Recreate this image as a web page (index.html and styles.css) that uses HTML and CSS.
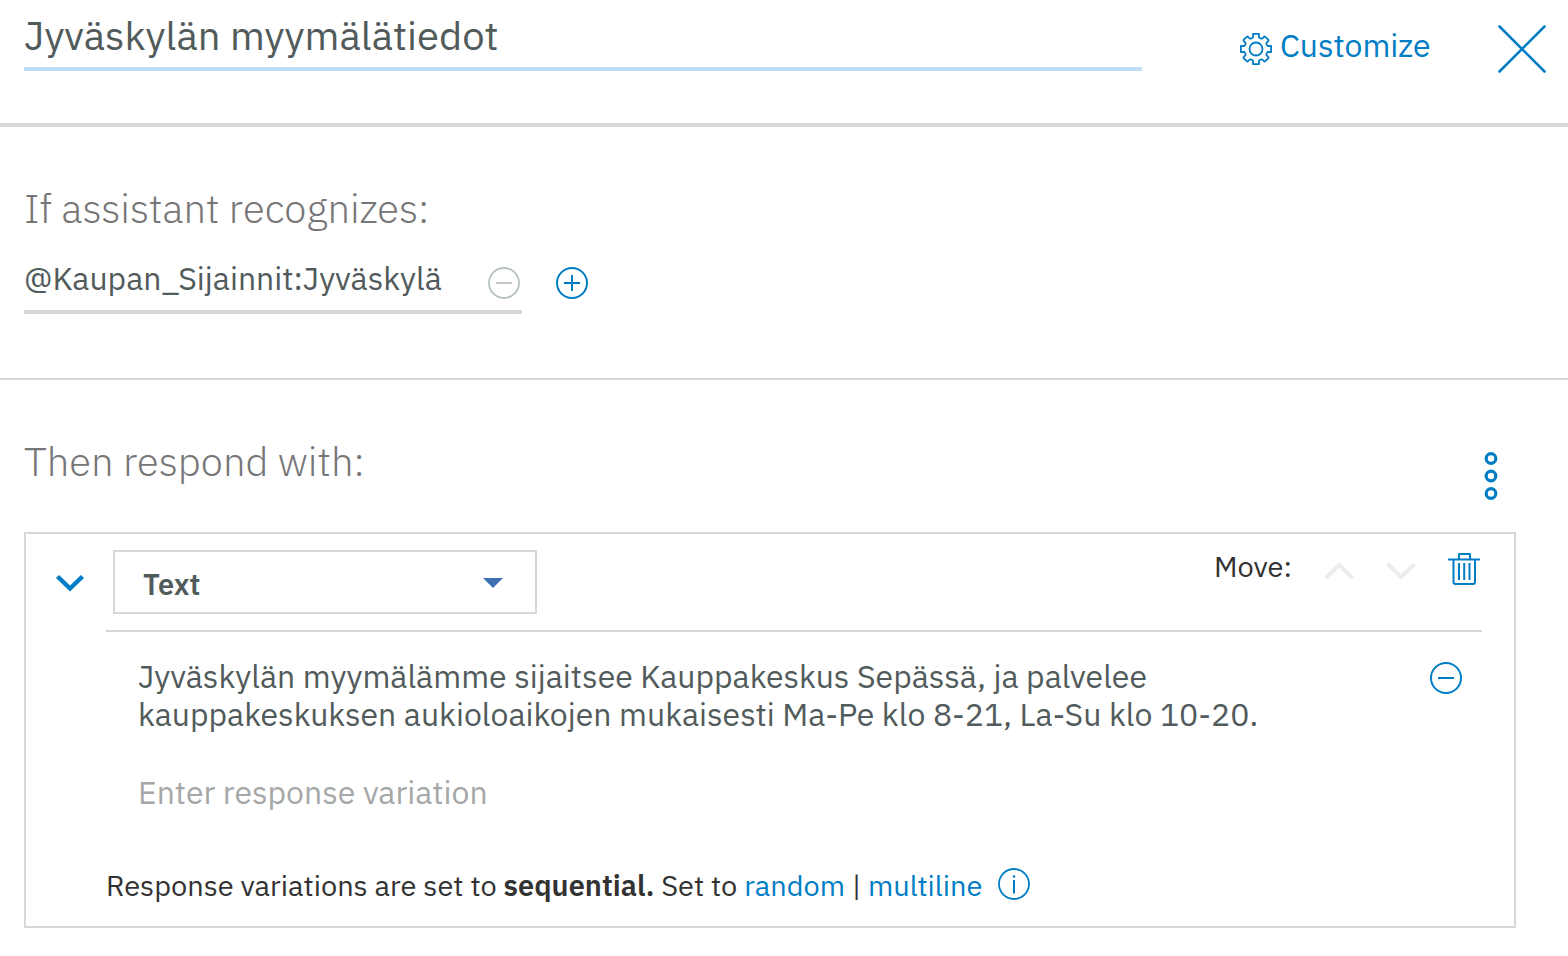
FILE: index.html
```html
<!DOCTYPE html>
<html lang="fi">
<head>
<meta charset="utf-8">
<meta name="viewport" content="width=device-width, initial-scale=1">
<title>Jyväskylän myymälätiedot</title>
<link rel="stylesheet" href="styles.css">
</head>
<body>
<header class="header">
  <input class="title-input" type="text" aria-label="Node name" value="Jyväskylän myymälätiedot">
  <button class="customize" type="button">
    <svg class="icon" viewBox="0 0 32 32" fill="none" stroke="currentColor" stroke-width="1.8" stroke-linejoin="round" aria-hidden="true">
      <path d="M13 .9h6v3q0 .8.8 1.1l1.300.6q.7.300 1.300-.300l1.500-1.500q.7-.7 1.400 0l2.900 2.900q.7.7 0 1.400l-1.500 1.500q-.6.6-.300 1.300l.6 1.300q.300.800 1.100.800h3v6h-3q-.8 0-1.100.8l-.6 1.300q-.3.7.3 1.300l1.500 1.500q.7.7 0 1.400l-2.900 2.900q-.7.7-1.400 0l-1.500-1.500q-.6-.6-1.300-.3l-1.300.6q-.8.300-.8 1.100v3h-6v-3q0-.8-.8-1.100l-1.300-.6q-.7-.3-1.300.3l-1.500 1.500q-.7.7-1.400 0l-2.900-2.900q-.7-.7 0-1.400l1.500-1.500q.6-.6.3-1.300l-.6-1.300q-.3-.8-1.100-.8h-3v-6h3q.8 0 1.100-.8l.6-1.300q.3-.7-.3-1.300l-1.500-1.500q-.7-.7 0-1.400l2.900-2.900q.7-.7 1.400 0l1.500 1.500q.6.6 1.300.3l1.300-.6q.8-.3.8-1.100z"/>
      <circle cx="16" cy="16" r="6.500"/>
    </svg>
    Customize
  </button>
  <button class="close" type="button" aria-label="Close">
    <svg viewBox="0 0 48 48" stroke="currentColor" stroke-width="2.600" stroke-linecap="round" aria-hidden="true"><path d="M1.500 1.500l45 45M46.500 1.500l-45 45"/></svg>
  </button>
</header>

<main>
<section class="section conditions">
  <h2 class="heading">If assistant recognizes:</h2>
  <div class="condition-row">
    <div class="condition">
      <input class="condition-input" type="text" aria-label="Condition" value="@Kaupan_Sijainnit:Jyväskylä">
      <button class="muted" type="button" aria-label="Remove condition">
        <svg class="icon" viewBox="0 0 32 32" fill="none" stroke="currentColor" stroke-width="1.800" aria-hidden="true"><circle cx="16" cy="16" r="15"/><path d="M8 16h16"/></svg>
      </button>
    </div>
    <button class="add" type="button" aria-label="Add condition">
      <svg class="icon" viewBox="0 0 32 32" fill="none" stroke="currentColor" stroke-width="2" aria-hidden="true"><circle cx="16" cy="16" r="15"/><path d="M8 16h16M16 8v16"/></svg>
    </button>
  </div>
</section>

<section class="section responses">
  <div class="section-head">
    <h2 class="heading">Then respond with:</h2>
    <button class="kebab" type="button" aria-label="More options">
      <svg viewBox="0 0 14 48" fill="none" stroke="currentColor" stroke-width="3.200" aria-hidden="true"><circle cx="7" cy="6.500" r="4.800"/><circle cx="7" cy="24" r="4.800"/><circle cx="7" cy="41.500" r="4.800"/></svg>
    </button>
  </div>

  <div class="card">
    <div class="toolbar">
      <button class="collapse" type="button" aria-label="Collapse response">
        <svg viewBox="0 0 30 18" fill="none" stroke="currentColor" stroke-width="4.500" aria-hidden="true"><path d="M2.500 2.500L15 14.500 27.500 2.500"/></svg>
      </button>
      <div class="type-picker">
        <select class="type-select" aria-label="Response type"><option>Text</option></select>
        <svg class="caret" viewBox="0 0 20 10" aria-hidden="true"><path d="M0 0h20L10 10z"/></svg>
      </div>
      <div class="tools">
        <span class="move-label">Move:</span>
        <button class="move" type="button" aria-label="Move up">
          <svg viewBox="0 0 30 18" fill="none" stroke="currentColor" stroke-width="4" aria-hidden="true"><path d="M1.500 16L15 3l13.500 13"/></svg>
        </button>
        <button class="move" type="button" aria-label="Move down">
          <svg viewBox="0 0 30 18" fill="none" stroke="currentColor" stroke-width="4" aria-hidden="true"><path d="M1.500 2L15 15 28.500 2"/></svg>
        </button>
        <button class="trash" type="button" aria-label="Delete response">
          <svg class="icon" viewBox="0 0 32 32" fill="none" stroke="currentColor" stroke-width="2" stroke-linejoin="round" aria-hidden="true"><path d="M0 6.500h32M11 6V1h11v5M5.500 7v22q0 2 2 2h17.500q2 0 2-2V7M11 10v17M16.200 10v17M21.500 10v17"/></svg>
        </button>
      </div>
    </div>

    <div class="body">
      <div class="variation">
        <textarea class="variation-text" rows="2" aria-label="Response text">Jyväskylän myymälämme sijaitsee Kauppakeskus Sepässä, ja palvelee kauppakeskuksen aukioloaikojen mukaisesti Ma-Pe klo 8-21, La-Su klo 10-20.</textarea>
        <button type="button" aria-label="Remove variation">
          <svg class="icon" viewBox="0 0 32 32" fill="none" stroke="currentColor" stroke-width="2" aria-hidden="true"><circle cx="16" cy="16" r="15"/><path d="M8 16h16"/></svg>
        </button>
      </div>
      <input class="new-variation" type="text" aria-label="New response variation" placeholder="Enter response variation">
      <div class="mode">
        <p class="mode-text">Response variations are set to <strong>sequential.</strong> Set to <a href="#random">random</a> | <a href="#multiline">multiline</a></p>
        <button type="button" aria-label="About response variations">
          <svg class="icon" viewBox="0 0 32 32" fill="none" stroke="currentColor" stroke-width="1.800" aria-hidden="true"><circle cx="16" cy="16" r="15"/><path d="M16 12v13.500" stroke-width="2"/><circle cx="16" cy="8.500" r="1.300" fill="currentColor" stroke="none"/></svg>
        </button>
      </div>
    </div>
  </div>
</section>
</main>
</body>
</html>
```
FILE: styles.css
```css
:root {
  --blue: #007dc5;
  --ink: #525b5b;
  --dark: #323232;
  --line: #d8d8d8;
}

* { box-sizing: border-box; }

body {
  margin: 0;
  background: #fff;
  color: var(--ink);
  font-family: "IBM Plex Sans", Roboto, sans-serif;
  font-size: 32px;
}

button, input, select, textarea {
  margin: 0;
  padding: 0;
  border: 0;
  background: none;
  color: inherit;
  font: inherit;
  outline: none;
}

button {
  display: flex;
  flex: none;
  color: var(--blue);
  cursor: pointer;
}

svg { display: block; flex: none; }
.icon { width: 32px; height: 32px; }

.header {
  display: flex;
  align-items: flex-start;
  padding: 0 22px 52px 24px;
  border-bottom: 4px solid var(--line);
}

.title-input {
  flex: 1;
  min-width: 0;
  height: 71px;
  padding-top: 2px;
  border-bottom: 4px solid #c0dcf4;
  font-size: 40px;
}

.customize {
  align-items: flex-end;
  gap: 8px;
  width: 190px;
  margin: 25px 68px 0 98px;
  line-height: 40px;
}

.close { margin: 25px 0 -2px; }
.close svg { width: 48px; height: 48px; }

.section { padding: 56px 52px 0 24px; }

.conditions {
  padding-bottom: 64px;
  border-bottom: 2px solid var(--line);
}

.heading {
  margin: 0;
  padding-bottom: 2px;
  color: #777677;
  font-size: 40px;
  font-weight: 300;
  line-height: 50px;
}

.condition-row {
  display: flex;
  align-items: center;
  gap: 34px;
  margin-top: 15px;
}

.condition {
  display: flex;
  align-items: center;
  width: 498px;
  height: 64px;
  padding-right: 2px;
  border-bottom: 4px solid var(--line);
}

.condition-input { flex: 1; min-width: 0; height: 60px; padding-bottom: 4px; }
.muted { padding-top: 6px; color: #b8c1c1; }
.add { padding-top: 2px; }

.section-head {
  display: flex;
  align-items: flex-start;
  justify-content: space-between;
  padding-right: 18px;
}

.kebab { margin-top: 16px; }
.kebab svg { width: 14px; height: 48px; }

.card {
  margin-top: 32px;
  padding: 16px 32px 24px 29px;
  border: 2px solid var(--line);
}

.toolbar { display: flex; align-items: flex-start; }
.collapse { margin: 24px 28px 0 0; }
.collapse svg { width: 30px; height: 18px; }

.type-picker { position: relative; width: 424px; }

.type-select {
  width: 100%;
  height: 64px;
  padding: 4px 28px 0;
  border: 2px solid var(--line);
  border-radius: 0;
  appearance: none;
  font-size: 29px;
  font-weight: 600;
}

.caret {
  position: absolute;
  top: 28px;
  right: 34px;
  width: 20px;
  height: 10px;
  fill: #3d70b2;
  pointer-events: none;
}

.tools {
  display: flex;
  align-items: center;
  margin-left: auto;
  padding-right: 2px;
}

.move-label {
  padding-bottom: 4px;
  color: var(--dark);
  font-size: 29px;
  line-height: 32px;
}

.move { margin-left: 32px; padding-top: 6px; color: #ececec; }
.move svg { width: 30px; height: 18px; }
.trash { margin-left: 32px; padding-top: 2px; }

.body {
  margin: 16px 0 0 51px;
  border-top: 2px solid var(--line);
}

.variation {
  display: flex;
  align-items: flex-start;
  justify-content: space-between;
  padding: 25px 20px 0 32px;
}

.variation > button { margin-top: 5px; }

.variation-text {
  display: block;
  flex: 1;
  max-width: 1200px;
  height: 76px;
  line-height: 38px;
  resize: none;
  overflow: hidden;
}

.new-variation {
  display: block;
  width: 100%;
  height: 40px;
  margin-top: 39px;
  padding-left: 32px;
}

.new-variation::placeholder { color: #a5a8a8; opacity: 1; }

.mode {
  display: flex;
  align-items: center;
  gap: 16px;
  margin-top: 54px;
  color: var(--dark);
  font-size: 29px;
}

.mode-text { margin: 0; padding-top: 2px; line-height: 34px; }
.mode strong { font-weight: 600; }
.mode a { color: var(--blue); text-decoration: none; }
```
